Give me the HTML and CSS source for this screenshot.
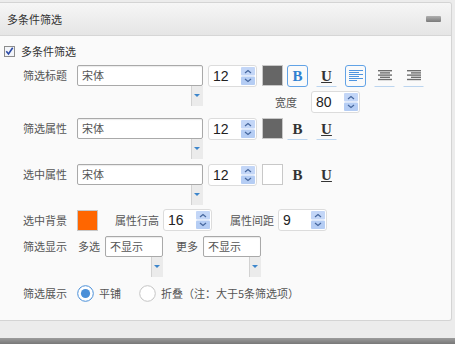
FILE: index.html
```html
<!DOCTYPE html>
<html>
<head>
<meta charset="utf-8">
<title>多条件筛选</title>
<link rel="stylesheet" href="styles.css">
</head>
<body>

<div class="panel">
  <div class="panel-head">
    <span class="panel-title">多条件筛选</span>
    <span class="min-btn"></span>
  </div>

  <div class="panel-body">
    <div class="check-row">
      <svg width="11" height="11" viewBox="0 0 11 11"><rect x="0.5" y="0.5" width="10" height="10" fill="#f3f5f9" stroke="#8c8c8c"/><polyline points="2.3,5.3 4.5,8 8.7,1.8" fill="none" stroke="#2b4aa6" stroke-width="1.6"/></svg>
      <span>多条件筛选</span>
    </div>

    <!-- title -->
    <div class="row row-1">
      <span class="label">筛选标题</span>
      <div class="font-pick">
        <span class="font-box">宋体</span>
        <span class="drop"><svg width="12" height="20" viewBox="0 0 12 20"><rect width="12" height="20" fill="#ebebeb"/><line x1="0.5" y1="0" x2="0.5" y2="20" stroke="#d2d2d2"/><polygon points="3,8 9,8 6,11" fill="#3c86cc"/></svg></span>
      </div>
      <div class="tools">
        <div class="tool-line">
          <span class="spin"><span>12</span><svg width="14" height="18" viewBox="0 0 14 18"><rect width="14" height="8.5" rx="1" fill="#c3d6f7"/><rect y="9.5" width="14" height="8.5" rx="1" fill="#b5cdf4"/><polyline points="4,6 7,3.5 10,6" fill="none" stroke="#46679e" stroke-width="1.2"/><polyline points="4,12 7,14.5 10,12" fill="none" stroke="#46679e" stroke-width="1.2"/></svg></span>
          <span class="swatch swatch-grey"></span>
          <span class="tb tb-first on"><b class="glyph-b">B</b></span>
          <span class="tb"><b class="glyph-u">U</b></span>
          <span class="tb on"><svg width="14" height="12" viewBox="0 0 14 12"><g fill="#4f95e0"><rect y="0" width="14" height="1"/><rect y="2" width="10" height="1"/><rect y="4" width="14" height="1"/><rect y="6" width="10" height="1"/><rect y="8" width="14" height="1"/><rect y="10" width="8" height="1"/></g></svg></span>
          <span class="tb"><svg width="14" height="12" viewBox="0 0 14 12"><g fill="#6e6e6e"><rect y="0" width="14" height="1.4"/><rect x="2" y="2.2" width="10" height="1.4"/><rect y="4.4" width="14" height="1.4"/><rect x="2" y="6.6" width="10" height="1.4"/><rect y="8.8" width="14" height="1.4"/></g></svg></span>
          <span class="tb"><svg width="14" height="12" viewBox="0 0 14 12"><g fill="#6e6e6e"><rect y="0" width="14" height="1.4"/><rect x="4" y="2.2" width="10" height="1.4"/><rect y="4.4" width="14" height="1.4"/><rect x="4" y="6.6" width="10" height="1.4"/><rect y="8.8" width="14" height="1.4"/></g></svg></span>
        </div>
        <div class="width-line">
          <span class="sub-label">宽度</span>
          <span class="spin"><span>80</span><svg width="14" height="18" viewBox="0 0 14 18"><rect width="14" height="8.5" rx="1" fill="#c3d6f7"/><rect y="9.5" width="14" height="8.5" rx="1" fill="#b5cdf4"/><polyline points="4,6 7,3.5 10,6" fill="none" stroke="#46679e" stroke-width="1.2"/><polyline points="4,12 7,14.5 10,12" fill="none" stroke="#46679e" stroke-width="1.2"/></svg></span>
        </div>
      </div>
    </div>

    <!-- attribute -->
    <div class="row row-2">
      <span class="label">筛选属性</span>
      <div class="font-pick">
        <span class="font-box">宋体</span>
        <span class="drop"><svg width="12" height="20" viewBox="0 0 12 20"><rect width="12" height="20" fill="#ebebeb"/><line x1="0.5" y1="0" x2="0.5" y2="20" stroke="#d2d2d2"/><polygon points="3,8 9,8 6,11" fill="#3c86cc"/></svg></span>
      </div>
      <div class="tools">
        <div class="tool-line">
          <span class="spin"><span>12</span><svg width="14" height="18" viewBox="0 0 14 18"><rect width="14" height="8.5" rx="1" fill="#c3d6f7"/><rect y="9.5" width="14" height="8.5" rx="1" fill="#b5cdf4"/><polyline points="4,6 7,3.5 10,6" fill="none" stroke="#46679e" stroke-width="1.2"/><polyline points="4,12 7,14.5 10,12" fill="none" stroke="#46679e" stroke-width="1.2"/></svg></span>
          <span class="swatch swatch-grey"></span>
          <span class="tb tb-first"><b class="glyph-b dark">B</b></span>
          <span class="tb"><b class="glyph-u">U</b></span>
        </div>
      </div>
    </div>

    <!-- selected -->
    <div class="row row-3">
      <span class="label">选中属性</span>
      <div class="font-pick">
        <span class="font-box">宋体</span>
        <span class="drop"><svg width="12" height="20" viewBox="0 0 12 20"><rect width="12" height="20" fill="#ebebeb"/><line x1="0.5" y1="0" x2="0.5" y2="20" stroke="#d2d2d2"/><polygon points="3,8 9,8 6,11" fill="#3c86cc"/></svg></span>
      </div>
      <div class="tools">
        <div class="tool-line">
          <span class="spin"><span>12</span><svg width="14" height="18" viewBox="0 0 14 18"><rect width="14" height="8.5" rx="1" fill="#c3d6f7"/><rect y="9.5" width="14" height="8.5" rx="1" fill="#b5cdf4"/><polyline points="4,6 7,3.5 10,6" fill="none" stroke="#46679e" stroke-width="1.2"/><polyline points="4,12 7,14.5 10,12" fill="none" stroke="#46679e" stroke-width="1.2"/></svg></span>
          <span class="swatch swatch-white"></span>
          <span class="tb tb-first plain"><b class="glyph-b dark">B</b></span>
          <span class="tb plain"><b class="glyph-u">U</b></span>
        </div>
      </div>
    </div>

    <!-- background / spacing -->
    <div class="row row-4">
      <span class="label">选中背景</span>
      <span class="swatch swatch-orange"></span>
      <span class="sub-label gap-a">属性行高</span>
      <span class="spin spin-sm"><span>16</span><svg width="14" height="18" viewBox="0 0 14 18"><rect width="14" height="8.5" rx="1" fill="#c3d6f7"/><rect y="9.5" width="14" height="8.5" rx="1" fill="#b5cdf4"/><polyline points="4,6 7,3.5 10,6" fill="none" stroke="#46679e" stroke-width="1.2"/><polyline points="4,12 7,14.5 10,12" fill="none" stroke="#46679e" stroke-width="1.2"/></svg></span>
      <span class="sub-label gap-b">属性间距</span>
      <span class="spin spin-sm"><span>9</span><svg width="14" height="18" viewBox="0 0 14 18"><rect width="14" height="8.5" rx="1" fill="#c3d6f7"/><rect y="9.5" width="14" height="8.5" rx="1" fill="#b5cdf4"/><polyline points="4,6 7,3.5 10,6" fill="none" stroke="#46679e" stroke-width="1.2"/><polyline points="4,12 7,14.5 10,12" fill="none" stroke="#46679e" stroke-width="1.2"/></svg></span>
    </div>

    <!-- display -->
    <div class="row row-5">
      <span class="label">筛选显示</span>
      <span class="sub-label gap-c">多选</span>
      <div class="font-pick small-pick">
        <span class="font-box">不显示</span>
        <span class="drop"><svg width="12" height="20" viewBox="0 0 12 20"><rect width="12" height="20" fill="#ebebeb"/><line x1="0.5" y1="0" x2="0.5" y2="20" stroke="#d2d2d2"/><polygon points="3,8 9,8 6,11" fill="#3c86cc"/></svg></span>
      </div>
      <span class="sub-label gap-d">更多</span>
      <div class="font-pick small-pick">
        <span class="font-box">不显示</span>
        <span class="drop"><svg width="12" height="20" viewBox="0 0 12 20"><rect width="12" height="20" fill="#ebebeb"/><line x1="0.5" y1="0" x2="0.5" y2="20" stroke="#d2d2d2"/><polygon points="3,8 9,8 6,11" fill="#3c86cc"/></svg></span>
      </div>
    </div>

    <!-- layout -->
    <div class="row row-6">
      <span class="label">筛选展示</span>
      <svg width="17" height="17" viewBox="0 0 17 17"><circle cx="8.5" cy="8.5" r="7.8" fill="#fff" stroke="#4a8fd8"/><circle cx="8.5" cy="8.5" r="4.6" fill="#4a8fd8"/></svg>
      <span class="radio-text">平铺</span>
      <svg class="radio-2" width="17" height="17" viewBox="0 0 17 17"><circle cx="8.5" cy="8.5" r="7.8" fill="#fff" stroke="#c4c4c4"/></svg>
      <span class="radio-text">折叠（注：大于5条筛选项）</span>
    </div>
  </div>
</div>

<div class="page-foot"></div>

</body>
</html>
```

FILE: styles.css
```css
body {
    margin: 0;
    background-color: #ececec;
    font-family: "Noto Sans CJK SC", sans-serif;
    font-size: 11px;
    color: #555;
}

.panel {
    width: 451px;
    margin-top: 2px;
    border: 1px solid #d4d4d4;
    border-left: none;
    border-radius: 0 3px 3px 0;
    background-color: #fafafa;
}

.panel-head {
    height: 32px;
    padding: 0 10px 0 7px;
    display: flex;
    align-items: center;
    justify-content: space-between;
    background: linear-gradient(#f6f6f6, #e5e5e5);
    border-bottom: 1px solid #d6d6d6;
    border-radius: 0 3px 0 0;
}

.panel-title {
    color: #333;
}

.min-btn {
    width: 15px;
    height: 6px;
    border-radius: 1px;
    background: linear-gradient(#b0b0b0, #7a7a7a);
}

.panel-body {
    padding: 8px 0 18px 0;
}

.check-row {
    height: 14px;
    padding-left: 4px;
    display: flex;
    align-items: center;
    color: #333;
}

.check-row svg {
    margin-right: 6px;
}

.row {
    display: flex;
    align-items: flex-start;
    padding-left: 23px;
}

.row-1 { margin-top: 7px; }
.row-2 { margin-top: 5px; }
.row-3 { margin-top: 5px; }
.row-4 { margin-top: 4px; align-items: center; }
.row-5 { margin-top: 5px; }
.row-6 { margin-top: 8px; align-items: center; }

.label {
    width: 54px;
    flex-shrink: 0;
    line-height: 21px;
}

.row-4 .label, .row-6 .label {
    line-height: 17px;
}

.font-pick {
    width: 126px;
    display: flex;
    flex-direction: column;
    align-items: flex-end;
}

.small-pick {
    width: 58px;
}

.font-box {
    width: 100%;
    height: 21px;
    box-sizing: border-box;
    border: 1px solid #a9a9a9;
    border-radius: 2px;
    background-color: #fff;
    box-shadow: inset 0 1px 1px rgba(0, 0, 0, 0.08);
    padding-left: 4px;
    line-height: 19px;
    color: #555;
}

.drop {
    height: 20px;
    display: block;
}

.drop svg {
    display: block;
}

.tools {
    margin-left: 5px;
}

.tool-line {
    display: flex;
    align-items: flex-start;
}

.spin {
    width: 49px;
    height: 22px;
    box-sizing: border-box;
    border: 1px solid #dcdcdc;
    border-radius: 3px;
    background-color: #fff;
    padding: 0 1px 0 4px;
    display: flex;
    align-items: center;
    justify-content: space-between;
    font-family: "Liberation Sans", Arial, sans-serif;
    font-size: 14px;
    color: #222;
}

.spin svg {
    display: block;
}

.spin-sm {
    margin-left: 4px;
}

.swatch {
    width: 21px;
    height: 21px;
    box-sizing: border-box;
    margin-left: 5px;
    border: 1px solid #c8c8c8;
}

.swatch-grey { background-color: #666; }
.swatch-white { background-color: #fff; }
.swatch-orange { background-color: #ff6600; margin-left: 0; }

.tb {
    width: 21px;
    height: 22px;
    box-sizing: border-box;
    margin-left: 8px;
    display: flex;
    align-items: center;
    justify-content: center;
    border: 1px solid transparent;
    border-bottom-color: #bcd5ef;
}

.tb-first {
    margin-left: 4px;
}

.tb.on {
    border-color: #62a3e6;
    border-radius: 3px;
}

.tb.plain {
    border-bottom-color: transparent;
}

.glyph-b, .glyph-u {
    font-family: "Liberation Serif", "Times New Roman", serif;
    font-size: 15px;
    font-weight: bold;
    line-height: 1;
}

.glyph-b {
    color: #2f80d1;
}

.glyph-b.dark, .glyph-u {
    color: #333;
}

.glyph-u {
    text-decoration: underline;
}

.width-line {
    margin-top: 4px;
    padding-left: 67px;
    display: flex;
    align-items: center;
}

.sub-label {
    line-height: 21px;
}

.width-line .sub-label {
    margin-right: 14px;
}

.gap-a { margin-left: 17px; }
.gap-b { margin-left: 18px; }
.gap-c { margin-left: 1px; margin-right: 5px; }
.gap-d { margin-left: 13px; margin-right: 5px; }

.radio-text {
    margin-left: 5px;
    line-height: 17px;
}

.radio-2 {
    margin-left: 18px;
}

.page-foot {
    height: 8px;
    margin-top: 17px;
    background: linear-gradient(#9c9c9c, #6c6c6c);
}
```
